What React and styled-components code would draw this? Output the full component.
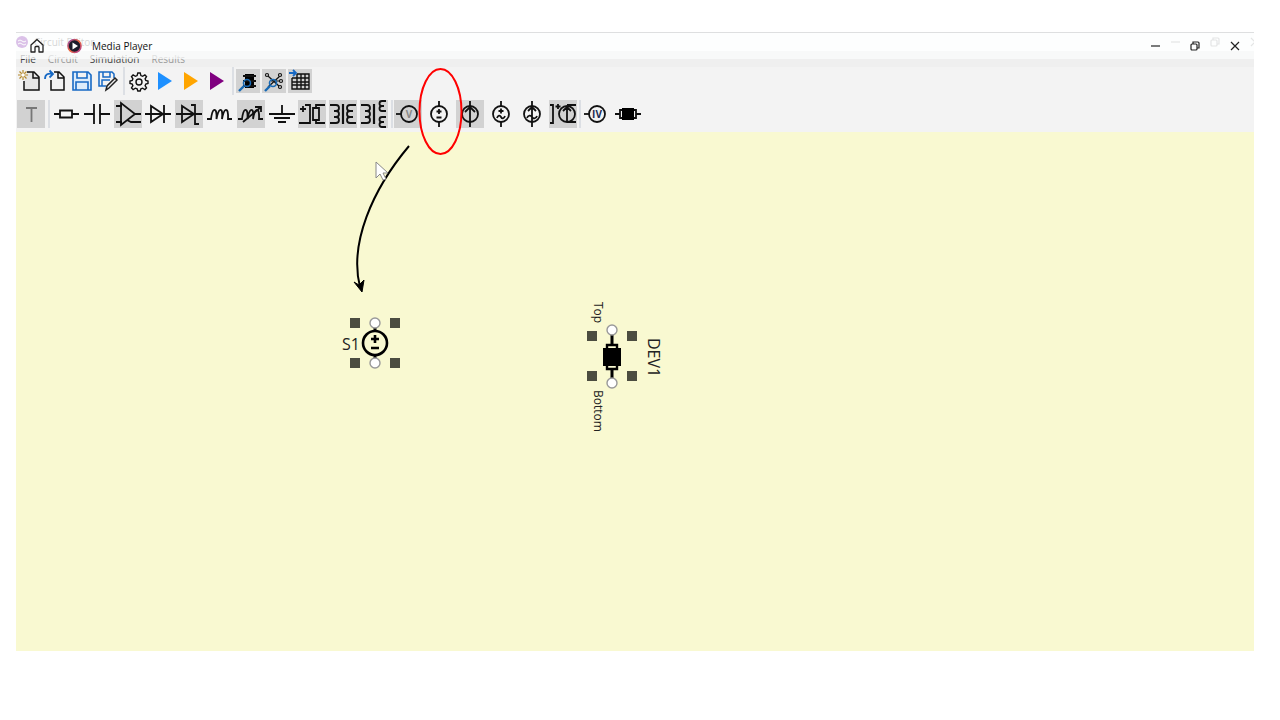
import React from "react";
import styled, { createGlobalStyle } from "styled-components";

const Global = createGlobalStyle`
  * { box-sizing: border-box; }
  body { margin: 0; background: #fff; font-family: "Open Sans", "Noto Sans", sans-serif; }
  button { font: inherit; color: inherit; border: 0; background: none; padding: 0; }
  svg { display: block; }
`;

const Page = styled.main`
  padding: 32px 26px 69px 16px;
  min-height: 100vh;
  display: flex;
`;
const Window = styled.section`
  position: relative;
  flex: 1;
  display: flex;
  flex-direction: column;
  background: #f3f3f3;
`;
const PlayerBar = styled.header`
  position: absolute;
  inset: 0 0 auto 0;
  height: 27px;
  display: flex;
  align-items: center;
  padding: 0 14px;
  background: rgba(252, 253, 254, 0.7);
  border-top: 1px solid #dedfe0;
`;
const PlayerTitle = styled.h1`
  flex: 1;
  margin: 0 0 0 10px;
  font-size: 10px;
  font-weight: 400;
  line-height: 16px;
  color: #111;
`;
const HomeButton = styled.button`
  margin-right: 23px;
`;
const WindowControls = styled.div`
  display: flex;
  gap: 30px;
  align-items: center;
`;
const EditorTitle = styled.div`
  height: 19px;
  display: flex;
  align-items: center;
  justify-content: space-between;
  background: #fdfdfe;
  color: #777;
  font-size: 10px;
  overflow: hidden;

  ${WindowControls} {
    margin-right: -6px;
  }
`;
const EditorName = styled.div`
  display: flex;
  align-items: center;
  gap: 6px;
`;
const Menu = styled.nav`
  height: 16px;
  display: flex;
  align-items: center;
  gap: 12px;
  padding: 0 4px;
  background: #efefef;
  font-size: 10px;
  line-height: 14px;
`;
const MenuItem = styled.button`
  color: ${(p) => (p.$dim ? "#999" : "#444")};
`;
const Toolbar = styled.div`
  height: ${(p) => p.$height}px;
  display: flex;
  align-items: center;
  padding-left: 1px;
`;
const Tool = styled.button`
  width: ${(p) => p.$size || 26}px;
  height: ${(p) => p.$size || 26}px;
  flex: none;
  display: grid;
  place-items: center;
  background: ${(p) => (p.$on ? "#d2d2d2" : "transparent")};
`;
const ViewTools = styled.div`
  display: flex;
  gap: 2px;
`;
const PartTool = styled(Tool).attrs({ $size: 28 })``;
const PartGroup = styled.div`
  width: ${(p) => p.$width}px;
  display: flex;
  justify-content: space-between;
`;
const Separator = styled.span`
  width: 2px;
  height: 28px;
  margin: 0 ${(p) => p.$after}px 0 ${(p) => p.$before}px;
  background: #dcdfe4;
`;
const Canvas = styled.div`
  position: relative;
  flex: 1;
  min-height: 519px;
  background: #f9f9d1;
`;
const NodeLabel = styled.span`
  position: absolute;
  left: ${(p) => p.$x}px;
  top: ${(p) => p.$y}px;
  color: #222;
  font-size: ${(p) => (p.$name ? 16 : 12)}px;
  line-height: 20px;
  writing-mode: ${(p) => (p.$down ? "vertical-rl" : "horizontal-tb")};
`;
const Highlight = styled.svg`
  position: absolute;
  left: 402px;
  top: 35px;
  pointer-events: none;
`;

const Svg = ({ size = 26, sw = 1.8, children }) => (
  <svg width={size} height={size} viewBox={`0 0 ${size} ${size}`} fill="none" stroke="#111" strokeWidth={sw} aria-hidden="true">
    {children}
  </svg>
);

const fileTools = [
  ["New", <Svg sw={1.5}><path d="M10 4H17L22 9V22H7V13" fill="#e5e5e5" /><path d="M16 4V10H22" /><path d="M6 2V12M1 7H11M2.5 3.5L9.5 10.5M9.5 3.5L2.5 10.5" stroke="#b58a2c" strokeWidth="1.2" /><circle cx="6" cy="7" r="1.8" fill="#fff" stroke="none" /></Svg>],
  ["Open", <Svg sw={1.5}><path d="M11 4H16L21 9V22H8V12M15 4V10H21" /><path d="M2 11C2 6 5 5 10 6M6.5 2.5L10 6L6.5 9.5" stroke="#1769c5" strokeWidth="1.8" /></Svg>],
  ["Save", <Svg sw={1.6}><path d="M4 4H19L22 7V22H4ZM8 4V10H18V4M7 22V14H19V22" stroke="#1769c5" fill="#dcecfb" /></Svg>],
  ["Save as", <Svg sw={1.5}><path d="M11 18H4V4H17L19 6V10M8 4V9H15V4M7 18V12H15" stroke="#1769c5" /><path d="M11 22L12 18L20 10L22 12L14 20Z" fill="#eee" stroke="#222" /></Svg>],
];
const gear = "M11.8 5H14.2L14.9 7.6L16.6 8.3L18.9 6.9L20.5 8.5L19.1 10.8L19.8 12.5L22 13.1V15.4L19.8 16L19.1 17.7L20.5 20L18.9 21.6L16.6 20.2L14.9 20.9L14.2 23H11.8L11.1 20.9L9.4 20.2L7.1 21.6L5.5 20L6.9 17.7L6.2 16L4 15.4V13.1L6.2 12.5L6.9 10.8L5.5 8.5L7.1 6.9L9.4 8.3L11.1 7.6Z";
const Play = ({ c }) => <Svg><path d="M6 4L20 13L6 22Z" fill={c} stroke="none" /></Svg>;
const Lens = () => <g stroke="#1769b5"><circle cx="11" cy="14" r="3.5" strokeWidth="1.6" /><path d="M8 17L3 22" strokeWidth="2.4" /></g>;

const coil = "M1 19H5Q6 11 8 10Q11 9 10.5 19Q12 11 14 10Q17 9 16 19Q17.5 11 19.5 10Q22.5 9 22 19H26";
const leftCoil = "M1 5H7A3 3 0 0 1 7 11H5M7 11A3 3 0 0 1 7 17H5M7 17A3 3 0 0 1 7 23H1";
const Source = ({ children }) => <Svg size={28}><circle cx="14" cy="14" r="8" />{children}</Svg>;

const parts = [
  ["Resistor", 0, <Svg size={28}><path d="M2 14H8M20 14H27M8 10.5H20V17.5H8Z" /></Svg>],
  ["Capacitor", 0, <Svg size={28}><path d="M1 14H11M17 14H27M11 4V24M17 4V24" /></Svg>],
  ["Amplifier", 1, <Svg size={28}><path d="M2 6H8M2 22H8M7 3V25L21 14ZM21 14H27M13 20L17 22H27" /></Svg>],
  ["Diode", 0, <Svg size={28}><path d="M1 14H27M7 6V22L19 14ZM20 5V23" /></Svg>],
  ["Zener diode", 1, <Svg size={28}><path d="M1 14H27M7 6V22L19 14ZM16 5H20V24H24" /></Svg>],
  ["Inductor", 0, <Svg size={28}><path d={coil} /></Svg>],
  ["Variable inductor", 1, <Svg size={28}><path d={coil} /><path d="M6 22L24 7M18 7H24V12" /></Svg>],
  ["Ground", 0, <Svg size={28}><path d="M14 5V14M1 14H27M6 18H22M10 22H18" /></Svg>],
  ["Controlled resistor", 1, <Svg size={28}><path d="M5 6V12M2 9H8M7 5H12V23H1M27 5H18V8M18 20V23H27M15 8H21V20H15Z" /></Svg>],
  ["Transformer", 1, <Svg size={28}><path d={leftCoil} /><path d="M14 4V24" strokeWidth="2.2" /><path d="M27 5H21A3 3 0 0 0 21 11H24M21 11A3 3 0 0 0 21 17H24M21 17A3 3 0 0 0 21 23H27" /></Svg>],
  ["Split transformer", 1, <Svg size={28}><path d={leftCoil} /><path d="M14 4V24" strokeWidth="2.2" /><path d="M26 1H22A2.5 2.5 0 0 0 22 6H24M22 6A2.5 2.5 0 0 0 22 11H26M26 17H22A2.5 2.5 0 0 0 22 22H24M22 22A2.5 2.5 0 0 0 22 27H26" /></Svg>],
];
const sources = [
  ["Voltage source", 0, <Source><path d="M14 1V6M14 22V27M14 9V14M11.5 11.5H16.5M11.5 17.5H16.5" /></Source>],
  ["Current source", 1, <Source><path d="M14 1V27M9 12L14 7L19 12" /></Source>],
  ["AC voltage source", 0, <Source><path d="M14 1V6M14 22V27M14 8.5V13.5M11.5 11H16.5M10 18C11 15 13 15 14 17S17 19 18 16" /></Source>],
  ["AC current source", 0, <Source><path d="M14 1V27M10 11L14 7L18 11M9 18C10 15 13 15 14 17S18 19 19 16" /></Source>],
  ["Controlled source", 1, <Svg size={28}><path d="M1 5H4V23H1M9 4V9M6.5 6.5H11.5M27 5H18M27 22H18M18 6V22M14 11L18 7L22 11" /><circle cx="18" cy="14" r="8" /></Svg>],
];

const toolButton = ([name, on, icon]) => <PartTool key={name} $on={on} aria-label={name}>{icon}</PartTool>;

const Meter = ({ cx, letters, fill, children }) => (
  <Svg size={28}>
    <circle cx={cx} cy="14" r="8" />
    {children}
    <text x={cx} y="18" textAnchor="middle" fontSize="10" fontWeight="700" fill={fill} stroke="none">{letters}</text>
  </Svg>
);

function ControlIcons({ faded }) {
  const c = faded ? "#aaa" : "#222";
  return (
    <>
      <button aria-label="Minimize"><svg width="10" height="10" fill="none" stroke={c} strokeWidth="1.2"><path d="M1 5H10" /></svg></button>
      <button aria-label="Restore"><svg width="10" height="10" fill="none" stroke={c} strokeWidth="1.2"><rect x="1" y="3" width="6" height="6" rx="1" /><path d="M3 3V1H8Q9 1 9 2V7H7" /></svg></button>
      <button aria-label="Close"><svg width="10" height="10" fill="none" stroke={c} strokeWidth="1.2"><path d="M1 1L9 9M9 1L1 9" /></svg></button>
    </>
  );
}

function Handles({ x, y }) {
  return [[0, 0], [40, 0], [0, 40], [40, 40]].map(([a, b]) => (
    <rect key={`${a}-${b}`} x={x + a} y={y + b} width="10" height="10" fill="#4c4d40" stroke="none" />
  ));
}

function Drawing() {
  return (
    <svg width="700" height="300" viewBox="0 0 700 300" fill="none" stroke="#000" strokeWidth="2" aria-hidden="true">
      <path d="M393 14C356 58 333 112 344 155" />
      <path d="M338 150L346 160L348 148L343 153Z" fill="#000" strokeWidth="1" />
      <path d="M360 30V46L364 42L367 48L370 47L367 41H372Z" fill="#fff" stroke="#888" strokeWidth="1" />
      <Handles x={334} y={186} />
      <path d="M359 192V200M359 222V230" strokeWidth="3" />
      <circle cx="359" cy="211" r="12" strokeWidth="2.6" />
      <path d="M359 203V211M355 207H363M355 216H363" strokeWidth="2.6" />
      <g fill="#fff" stroke="#999" strokeWidth="1.4"><circle cx="359" cy="191" r="5" /><circle cx="359" cy="231" r="5" /></g>
      <Handles x={571} y={199} />
      <path d="M596 199V212M596 238V250" strokeWidth="3" />
      <path d="M591 213H601V237H591Z" strokeWidth="2.4" />
      <rect x="587" y="216" width="18" height="18" fill="#000" stroke="none" />
      <g fill="#fff" stroke="#999" strokeWidth="1.4"><circle cx="596" cy="198" r="5" /><circle cx="596" cy="251" r="5" /></g>
    </svg>
  );
}

export default function App() {
  return (
    <Page>
      <Global />
      <Window>
        <EditorTitle>
          <EditorName>
            <svg width="12" height="12"><circle cx="6" cy="6" r="6" fill="#8d35b5" /><path d="M2 5Q4 3 6 5T10 5M2 8Q4 6 6 8T10 8" stroke="#fff" fill="none" /></svg>
            <span>Circuit Editor</span>
          </EditorName>
          <WindowControls><ControlIcons faded /></WindowControls>
        </EditorTitle>
        <Menu>
          <MenuItem>File</MenuItem>
          <MenuItem $dim>Circuit</MenuItem>
          <MenuItem>Simulation</MenuItem>
          <MenuItem $dim>Results</MenuItem>
        </Menu>
        <Toolbar $height={28}>
          {fileTools.map(([n, icon]) => <Tool key={n} aria-label={n}>{icon}</Tool>)}
          <Separator $before={2} $after={1} />
          <Tool aria-label="Settings"><Svg sw={1.4}><path d={gear} /><circle cx="13" cy="14" r="3" /></Svg></Tool>
          <Tool aria-label="Run"><Play c="#1e90ff" /></Tool>
          <Tool aria-label="Run sweep"><Play c="#ffa500" /></Tool>
          <Tool aria-label="Run batch"><Play c="#800080" /></Tool>
          <Separator $before={2} $after={2} />
          <ViewTools>
            <Tool $on $size={24} aria-label="Inspect device">
              <Svg size={24}><path d="M9 5H18V19H9Z" fill="#000" stroke="none" /><path d="M7 7H20M7 12H20M7 17H20" strokeWidth="2" /><Lens /></Svg>
            </Tool>
            <Tool $on $size={24} aria-label="Inspect network">
              <Svg size={24} sw={1.2}><path d="M6 7L18 18M18 7L6 18M9 12H19" /><g fill="#ddd"><circle cx="5" cy="6" r="1.5" /><circle cx="18" cy="6" r="1.5" /><circle cx="19" cy="12" r="1.5" /><circle cx="18" cy="18" r="1.5" /></g><Lens /></Svg>
            </Tool>
            <Tool $on $size={24} aria-label="Results table">
              <Svg size={24} sw={1.4}><path d="M9 5H21V20H4V9M4 9H21M4 13H21M4 16H21M9 5V20M13 5V20M17 5V20" /><path d="M1 4H8M5 1L8 4L5 7" stroke="#1769c5" strokeWidth="1.8" /></Svg>
            </Tool>
          </ViewTools>
        </Toolbar>
        <Toolbar $height={37}>
          <PartTool $on aria-label="Text"><Svg size={28}><path d="M9 8H20M14.5 8V22" stroke="#777" /></Svg></PartTool>
          <Separator $before={3} $after={2} />
          <PartGroup $width={336}>{parts.map(toolButton)}</PartGroup>
          <Separator $before={3} $after={1} />
          <PartGroup $width={31}>
            <PartTool $on aria-label="Voltmeter"><Meter cx={15} letters="V" fill="#888"><path d="M2 14H7" /></Meter></PartTool>
          </PartGroup>
          <PartGroup $width={152}>{sources.map(toolButton)}</PartGroup>
          <Separator $before={2} $after={1} />
          <PartGroup $width={60}>
            <PartTool aria-label="Current and voltage meter"><Meter cx={15} letters="IV" fill="#1b2a52"><path d="M2 14H7" /></Meter></PartTool>
            <PartTool aria-label="Device"><Svg size={28}><path d="M1 14H6M22 14H27M6 10H22V18H6Z" /><rect x="8" y="8" width="12" height="12" fill="#000" stroke="none" /></Svg></PartTool>
          </PartGroup>
        </Toolbar>
        <Canvas>
          <Drawing />
          <NodeLabel $name $x={326} $y={202}>S1</NodeLabel>
          <NodeLabel $name $down $x={628} $y={206}>DEV1</NodeLabel>
          <NodeLabel $down $x={572} $y={170}>Top</NodeLabel>
          <NodeLabel $down $x={572} $y={258}>Bottom</NodeLabel>
        </Canvas>
        <PlayerBar>
          <HomeButton aria-label="Home">
            <svg width="14" height="16" fill="none" stroke="#222" strokeWidth="1.3" strokeLinejoin="round"><path d="M1 7L7 1.5L13 7V14H9V9.5Q9 8.5 8 8.5H6Q5 8.5 5 9.5V14H1Z" /></svg>
          </HomeButton>
          <svg width="15" height="16" viewBox="0 0 15 16" aria-hidden="true">
            <defs><linearGradient id="ring" x1="0" y1="0" x2="1" y2="1"><stop offset="0" stopColor="#8a3fa8" /><stop offset="0.5" stopColor="#f0693a" /><stop offset="1" stopColor="#a9379b" /></linearGradient></defs>
            <circle cx="7.5" cy="8" r="6.5" fill="#1d1a2b" stroke="url(#ring)" strokeWidth="1.6" />
            <path d="M5.5 4.5L11 8L5.5 11.5Z" fill="#fff" />
          </svg>
          <PlayerTitle>Media Player</PlayerTitle>
          <WindowControls><ControlIcons /></WindowControls>
        </PlayerBar>
        <Highlight width="45" height="89" fill="none" stroke="#f00" strokeWidth="2" aria-hidden="true">
          <ellipse cx="22.5" cy="44.5" rx="21" ry="42.5" />
        </Highlight>
      </Window>
    </Page>
  );
}
